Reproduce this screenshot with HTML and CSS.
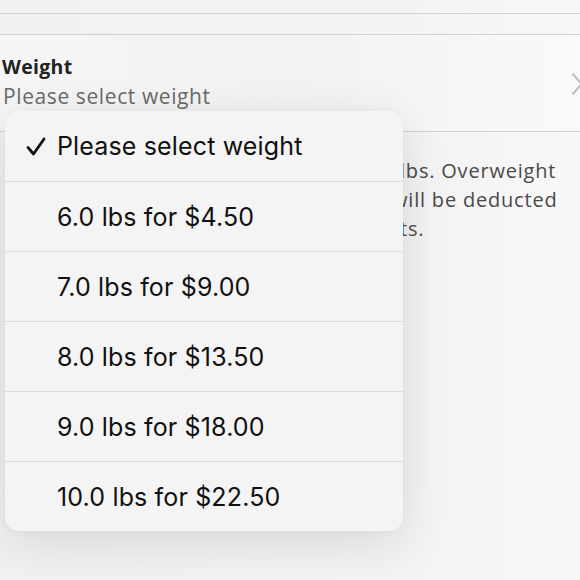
FILE: index.html
```html
<!DOCTYPE html>
<html>
<head>
<meta charset="utf-8">
<link rel="stylesheet" href="styles.css">
</head>
<body>
<div class="page">
  <div class="band band-top"></div>
  <div class="band band-mid"></div>
  <div class="row">
    <div class="row-text">
      <div class="label">Weight</div>
      <div class="value">Please select weight</div>
    </div>
    <svg class="chev" width="12" height="24" viewBox="0 0 12 24"><path d="M1.5 1.5 L10.5 12 L1.5 22.5" fill="none" stroke="#bdbdbd" stroke-width="2"/></svg>
  </div>
  <div class="note">
    <div class="line">lbs. Overweight</div>
    <div class="line shift">will be deducted</div>
    <div class="line">ts.</div>
  </div>
  <div class="menu">
    <div class="opt"><svg class="check" width="20" height="20" viewBox="0 0 20 20"><path d="M2 10.5 L7.5 17 L18 2" fill="none" stroke="#111" stroke-width="2.8" stroke-linecap="round" stroke-linejoin="round"/></svg><span>Please select weight</span></div>
    <div class="opt"><span>6.0 lbs for $4.50</span></div>
    <div class="opt"><span>7.0 lbs for $9.00</span></div>
    <div class="opt"><span>8.0 lbs for $13.50</span></div>
    <div class="opt"><span>9.0 lbs for $18.00</span></div>
    <div class="opt"><span>10.0 lbs for $22.50</span></div>
  </div>
</div>
</body>
</html>
```
FILE: styles.css
```css
html, body {
  margin: 0;
  padding: 0;
}
body {
  background: #f3f3f3;
  width: 580px;
  height: 580px;
  overflow: hidden;
  font-family: "Open Sans", "Liberation Sans", sans-serif;
}
.page {
  position: relative;
  height: 580px;
  background: linear-gradient(90deg, #f1f1f1 0%, #f3f3f3 70%, #f8f8f8 100%);
}
.band-top {
  height: 13px;
  border-bottom: 1px solid #d2d2d2;
}
.band-mid {
  height: 20px;
  border-bottom: 1px solid #d2d2d2;
}
.row {
  height: 96px;
  border-bottom: 1px solid #d2d2d2;
  display: flex;
  align-items: center;
  justify-content: space-between;
  background: linear-gradient(90deg, #f5f5f5 0%, #f2f2f2 50%, #f9f9f9 100%);
}
.row-text {
  padding-left: 2px;
  padding-top: 2px;
}
.label {
  font-size: 19.5px;
  font-weight: 700;
  color: #222;
  line-height: 24px;
  letter-spacing: 0.3px;
}
.value {
  font-size: 21px;
  color: #6a6a6a;
  line-height: 34px;
  padding-left: 1px;
  letter-spacing: 0.6px;
}
.chev {
  margin-right: -3px;
  margin-top: 2px;
}
.note {
  padding-top: 24px;
  padding-left: 400px;
  font-size: 20px;
  color: #4a4a4a;
  line-height: 29px;
  letter-spacing: 0.8px;
}
.line {
  white-space: nowrap;
}
.shift {
  margin-left: -8px;
}
.menu {
  position: absolute;
  left: 5px;
  top: 111px;
  width: 398px;
  background: #f4f4f4;
  border-radius: 14px;
  box-shadow: 0 12px 50px rgba(0, 0, 0, 0.11), 0 0 8px rgba(0,0,0,0.03);
  overflow: hidden;
}
.opt {
  height: 70px;
  display: flex;
  align-items: center;
  padding-left: 52px;
  position: relative;
  font-family: Inter, "Liberation Sans", sans-serif;
  font-size: 25px;
  letter-spacing: 0.15px;
  color: #111;
  border-top: 1px solid #dadada;
  box-sizing: border-box;
}
.opt:first-child {
  border-top: none;
}
.check {
  position: absolute;
  left: 21px;
  top: 26px;
}
```
